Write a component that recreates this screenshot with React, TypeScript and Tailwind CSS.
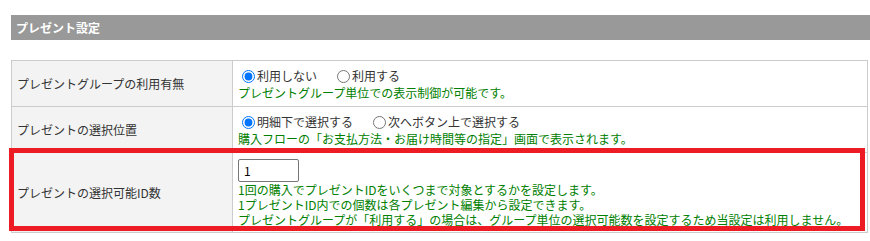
import React from 'react';

const font = { fontFamily: '"Noto Sans CJK JP", "Noto Sans", sans-serif' };

const Radio: React.FC<{ name: string; label: string; checked?: boolean }> = ({ name, label, checked }) => (
  <label className="inline-flex items-center mr-[16px]">
    <input type="radio" name={name} defaultChecked={checked} className="m-0 ml-[4px] mr-[2px] w-[13px] h-[13px] accent-[#0075ff]" />
    <span>{label}</span>
  </label>
);

const Note: React.FC<{ children: React.ReactNode }> = ({ children }) => (
  <div className="text-[#008000] leading-[15px]">{children}</div>
);

export default function App() {
  return (
    <div className="relative w-[870px] h-[241px] bg-white text-[12px] text-[#333]" style={font}>
      <div className="ml-[11px] pt-[15px]">
        <div className="h-[25px] bg-[#999999] text-white font-bold flex items-center pl-[5px] leading-none">
          プレゼント設定
        </div>
      </div>

      <table className="ml-[11px] mt-[20px] w-[857px] border-collapse">
        <tbody>
          <tr className="h-[46px]">
            <td className="w-[221px] bg-[#f2f3f2] border border-[#cccccc] pl-[5px] align-middle">プレゼントグループの利用有無</td>
            <td className="border border-[#cccccc] px-[5px] align-middle">
              <div className="flex items-center h-[18px]">
                <Radio name="g" label="利用しない" checked />
                <Radio name="g" label="利用する" />
              </div>
              <Note>プレゼントグループ単位での表示制御が可能です。</Note>
            </td>
          </tr>
          <tr className="h-[46px]">
            <td className="bg-[#f2f3f2] border border-[#cccccc] pl-[5px] align-middle">プレゼントの選択位置</td>
            <td className="border border-[#cccccc] px-[5px] align-middle">
              <div className="flex items-center h-[18px]">
                <Radio name="p" label="明細下で選択する" checked />
                <Radio name="p" label="次へボタン上で選択する" />
              </div>
              <Note>購入フローの「お支払方法・お届け時間等の指定」画面で表示されます。</Note>
            </td>
          </tr>
          <tr className="h-[80px]">
            <td className="bg-[#f2f3f2] border border-[#cccccc] pl-[5px] align-middle">プレゼントの選択可能ID数</td>
            <td className="border border-[#cccccc] px-[5px] align-middle">
              <input
                type="text"
                defaultValue="1"
                className="block w-[61px] h-[23px] border border-[#767676] rounded-[2px] px-[5px] text-[12px] text-black outline-none"
                style={font}
              />
              <div>
                <Note>1回の購入でプレゼントIDをいくつまで対象とするかを設定します。</Note>
                <Note>1プレゼントID内での個数は各プレゼント編集から設定できます。</Note>
                <Note>プレゼントグループが「利用する」の場合は、グループ単位の選択可能数を設定するため当設定は利用しません。</Note>
              </div>
            </td>
          </tr>
        </tbody>
      </table>

      <div className="absolute left-[9px] top-[148px] w-[856px] h-[83px] border-[5px] border-[#ed1c24] pointer-events-none" />
    </div>
  );
}
